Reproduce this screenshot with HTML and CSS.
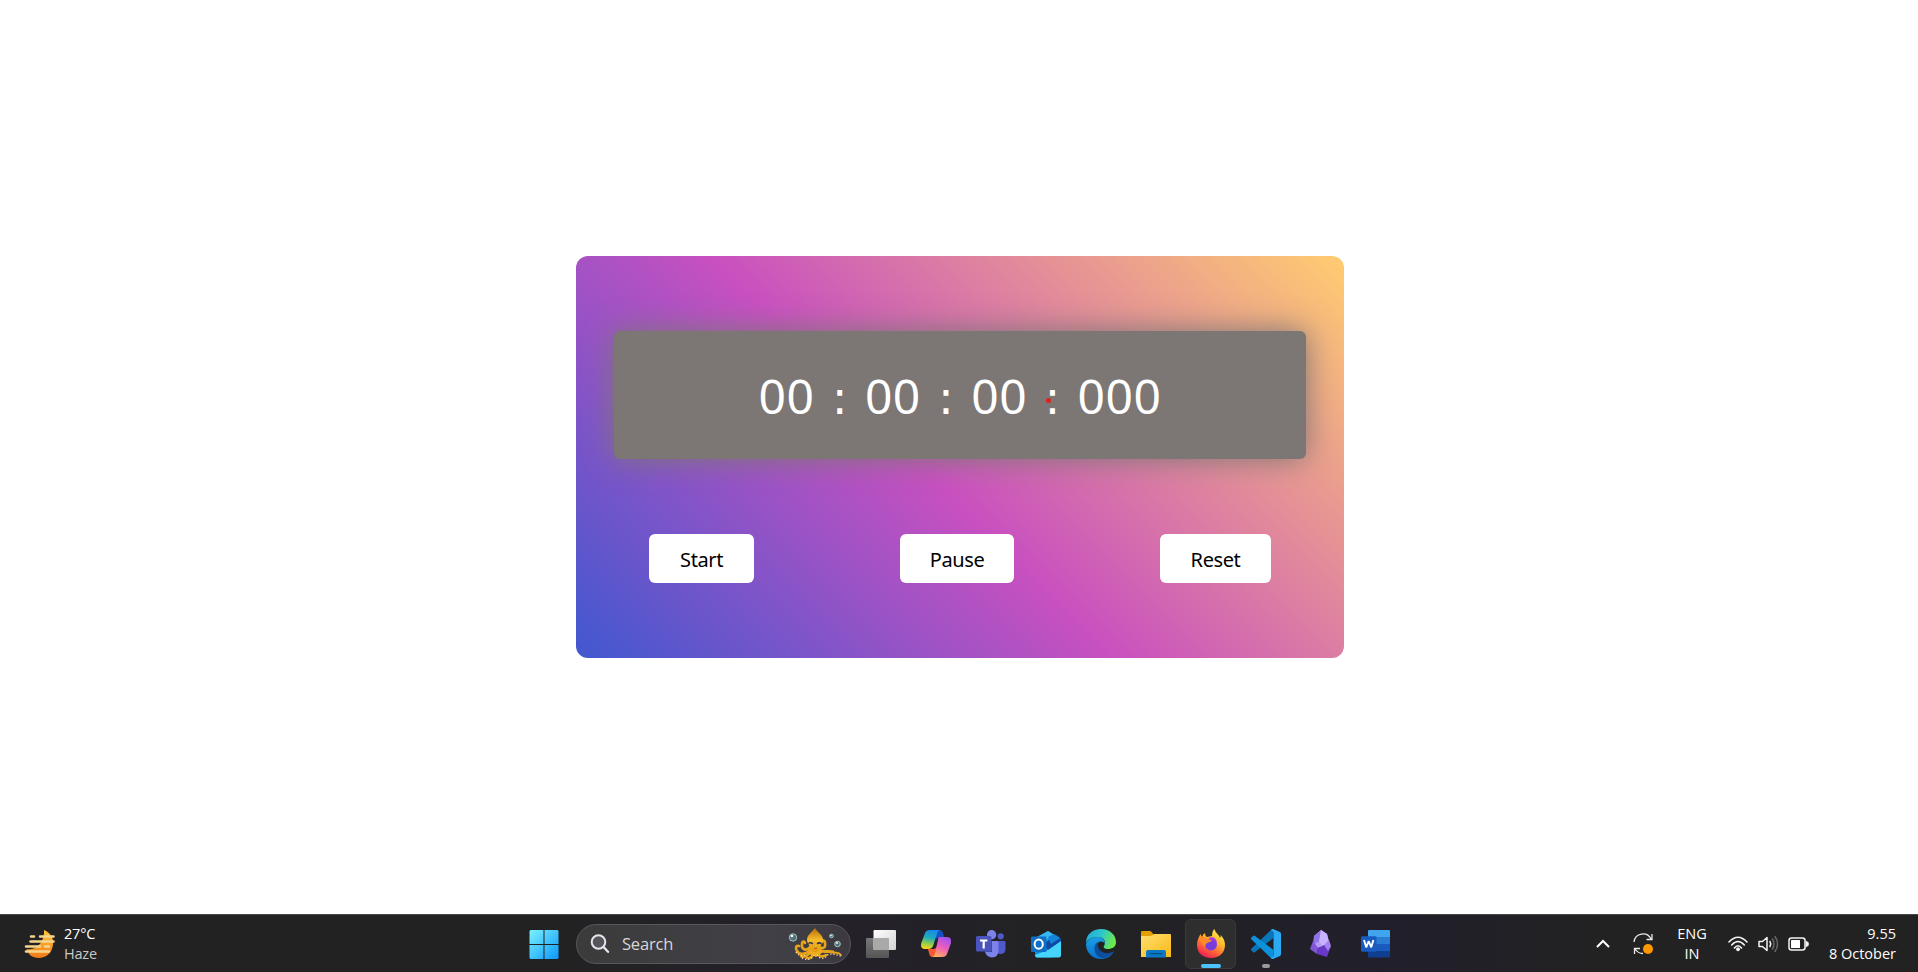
FILE: index.html
```
<!DOCTYPE html>
<html lang="en">
<head>
<meta charset="utf-8">
<title>Stopwatch</title>
<link rel="stylesheet" href="styles.css">
</head>
<body>
<main class="stage">
  <section class="card">
    <div class="display">00<span class="sep"> : </span>00<span class="sep"> : </span>00<span class="sep"> : </span>000<span class="dot"></span></div>
    <div class="controls">
      <button class="btn start">Start</button>
      <button class="btn pause">Pause</button>
      <button class="btn reset">Reset</button>
    </div>
  </section>
</main>
<footer class="taskbar">
  <div class="weather">
    <svg width="32" height="30" viewBox="0 0 32 30">
      <defs><linearGradient id="moon" x1="0" y1="0" x2="0" y2="1"><stop stop-color="#ffc83d"/><stop offset="1" stop-color="#f07a16"/></linearGradient></defs>
      <path d="M20 1C27 4 30 10 29 16C28 24 22 29 15 29C8 29 4 25 2.500 20C13 22 21 12 20 1Z" fill="url(#moon)"/>
      <g stroke="#f6d58d" stroke-width="2.500" stroke-linecap="round"><path d="M7 7.500H10M16 7.500H29.500"/><path d="M6.500 12.500H29.500"/><path d="M2 17.500H16M21 17.500H25"/><path d="M2 22.500H25"/></g>
    </svg>
    <div class="weather-text"><span>27°C</span><span class="muted">Haze</span></div>
  </div>
  <nav class="apps">
    <div class="slot">
      <svg class="windows" width="30" height="30" viewBox="0 0 30 30"><defs><linearGradient id="win" gradientUnits="userSpaceOnUse" x1="0" y1="0" x2="30" y2="30"><stop stop-color="#7df3ff"/><stop offset="1" stop-color="#0a97fa"/></linearGradient></defs><path fill="url(#win)" d="M1.500 1H14.500V15H.5V2ZM15.500 1H28.500L29.500 2V15H15.500ZM.5 16H14.500V30H1.500L.5 29ZM15.500 16H29.500V29L28.500 30H15.500Z"/></svg>
    </div>
    <div class="search">
      <svg class="lens" width="20" height="20" viewBox="0 0 20 20" fill="#55555b" stroke="#e4e6ec" stroke-width="2"><circle cx="8.500" cy="8" r="6.800"/><path d="M13.500 13L18 17.800" stroke-width="2.400" stroke-linecap="round"/></svg>
      <span>Search</span>
      <svg class="octopus" width="54" height="34" viewBox="0 0 54 34" fill="none">
        <defs><linearGradient id="oct" x1="0" y1="0" x2="0" y2="1"><stop stop-color="#b76b0c"/><stop offset=".5" stop-color="#f4bd28"/><stop offset="1" stop-color="#e2990f"/></linearGradient></defs>
        <g stroke="#e7a41a" stroke-width="2.600" stroke-linecap="round">
          <path d="M22 20C18 25 13 22 14 17C14 14 17 14 17 16"/><path d="M23 21C20 27 12 29 9 24C7 21 8 18 11 19"/><path d="M24 22C21 28 17 31 13 29"/><path d="M26 23C25 29 23 32 19 31"/><path d="M31 19C34 23 38 21 37 16C37 13 34 13 34 15"/><path d="M31 22C34 27 39 23 45 25" stroke-width="3"/><path d="M44 25C48 27 50 24 53 28" stroke-width="1.800"/><path d="M28 23C29 29 34 31 38 28"/>
        </g>
        <path d="M22 20H32L34 26L28 30L21 27Z" fill="#efae20"/>
        <g stroke="#ffe5b0" stroke-width="1.300" stroke-dasharray="1.200 2"><path d="M8 25C10 29 15 30 19 27M14 31C19 34 24 32 26 28M29 28C33 34 38 31 39 28C44 26 48 28 53 29"/></g>
        <path d="M27 1C24 5 19 8 19 13C19 17 23 18 22 23C25 26 30 26 32 22C31 18 36 16 35 12C34 7 29 5 27 1Z" fill="url(#oct)"/>
        <path d="M20.500 16.500Q22.500 15 25 17M29 17Q31 15 33.500 16.500" stroke="#36315b" stroke-width="1.500"/><path d="M26 21Q27.500 22 29 21" stroke="#9c520c"/>
        <g fill="#596d76" stroke="#9ec8c4"><circle cx="5" cy="10.500" r="3.700"/><circle cx="43.500" cy="9" r="1.800"/><circle cx="49.500" cy="17" r="2.800"/></g>
        <g fill="#effbff"><circle cx="4" cy="9" r="1.300"/><circle cx="43" cy="8.500" r=".8"/><circle cx="49" cy="16" r="1"/></g>
      </svg>
    </div>
    <div class="slot">
      <svg width="30" height="30" viewBox="0 0 30 30"><defs><linearGradient id="tv" x1="0" y1="0" x2="1" y2="1"><stop stop-color="#fff"/><stop offset="1" stop-color="#d2d2d2"/></linearGradient><linearGradient id="tg" x1="0" y1="0" x2="0" y2="1"><stop stop-color="#777"/><stop offset="1" stop-color="#555"/></linearGradient></defs><rect y="9" width="23" height="20" rx="1" fill="url(#tg)"/><rect x="7.500" y="1" width="22.500" height="20" rx="1" fill="url(#tv)"/><path d="M7.500 9H22Q23 9 23 10V21H8.500Q7.500 21 7.500 20Z" fill="#a9a9a9"/></svg>
    </div>
    <div class="slot">
      <svg width="30" height="30" viewBox="0 0 30 30"><defs><linearGradient id="cl" x1=".5" y1="0" x2=".3" y2="1"><stop stop-color="#168be9"/><stop offset=".4" stop-color="#20aaba"/><stop offset=".72" stop-color="#91cd50"/><stop offset="1" stop-color="#ffd31a"/></linearGradient><linearGradient id="cr" x1=".7" y1="0" x2=".3" y2="1"><stop stop-color="#a052ee"/><stop offset=".5" stop-color="#ed5dbd"/><stop offset="1" stop-color="#ffad58"/></linearGradient></defs>
      <path d="M15 1H19Q21 1 22 4L23 8H18Q16 8 15 11Z" fill="#1550c7"/><path d="M7 20H13Q15 20 16 17L14 25Q13 28 11 28Q9 28 8 24Z" fill="#f45932"/>
      <path d="M9 1H19Q17 1 16 5L12 17Q11 20 7 20H4Q-1 20 .3 14L4 4Q5 1 9 1Z" fill="url(#cl)"/><path d="M18 8H26Q31 8 30 14L26 25Q25 28 21 28H10Q13 28 14 24L17 11Q17 8 18 8Z" fill="url(#cr)"/></svg>
    </div>
    <div class="slot">
      <svg width="30" height="30" viewBox="0 0 30 30"><circle cx="24.700" cy="7.300" r="3.100" fill="#5059c9"/><path d="M20 12H28.500Q29.500 12 29.500 13V20Q29.500 25 24.500 25Q20 25 20 20Z" fill="#5059c9"/><circle cx="15.600" cy="5.700" r="4.700" fill="#7b83eb"/><path d="M9 12H21.500Q22.500 12 22.500 13V21Q22.500 28.500 15.700 28.500Q9 28 9 21Z" fill="#7b83eb"/><path d="M9 12H16V23H9.500Z" fill="#3942a0"/><rect y="7" width="15.500" height="15.500" rx="1.500" fill="#4b53bc"/><path d="M4 10.500H11.400V12.500H8.800V19.500H6.600V12.500H4Z" fill="#fff"/></svg>
    </div>
    <div class="slot">
      <svg width="30" height="30" viewBox="0 0 30 30"><path d="M4 10L17 2L30 10V16L17 24L4 16Z" fill="#1490df"/><path d="M4 9L17 2L23 6L9 15Z" fill="#35b8f1"/><path d="M12 15L26 6L30 10V14L18 22Z" fill="#0c4aa6"/><path d="M17 8L23 5L29 9L20 15Z" fill="#1684d8"/><path d="M4 16L22 28.500H6Q4 28.500 4 26Z" fill="#148ee0"/><path d="M30 12V26Q30 28.500 27.500 28.500H6Q4 28 4 26L17 21Z" fill="#45d5fb"/><rect y="7.500" width="15.500" height="15.500" rx="1.300" fill="#0f6fc6"/><ellipse cx="7.700" cy="15.200" rx="4.100" ry="4.600" fill="none" stroke="#fff" stroke-width="2"/></svg>
    </div>
    <div class="slot">
      <svg width="30" height="30" viewBox="0 0 30 30"><defs><linearGradient id="e1" x1="0" y1=".2" x2="1" y2=".5"><stop stop-color="#23a8dc"/><stop offset=".5" stop-color="#2ec8c9"/><stop offset="1" stop-color="#6fea45"/></linearGradient><linearGradient id="e2" x1="0" y1="0" x2="0" y2="1"><stop stop-color="#1ba0e5"/><stop offset="1" stop-color="#0870c9"/></linearGradient></defs><path d="M0 14C0 5 7 0 15 0C24 0 30 6 30 13C30 18 26 20 22 20C18 20 17 18 18 17C21 12 17 8 12 8C6 8 1 11 0 14Z" fill="url(#e1)"/><path d="M0 15C1 11 6 8 12 8C16 8 19 11 19 15C17 12 14 12 12 14C9 17 11 24 18 25C22 26 26 24 28 22C25 28 20 30 15 30C7 30 0 24 0 15Z" fill="url(#e2)"/><path d="M12 13C7 15 7 24 13 28C16 30 24 29 28 22C22 26 13 24 12 17Q11 15 12 13Z" fill="#0c4e9c"/></svg>
    </div>
    <div class="slot">
      <svg width="30" height="30" viewBox="0 0 30 30"><defs><linearGradient id="fo" x1="0" y1="0" x2="1" y2="1"><stop stop-color="#ffdf70"/><stop offset="1" stop-color="#f9b916"/></linearGradient></defs><path d="M0 3Q0 2 1 2H9Q10 2 13 6H20V10H0Z" fill="#e4a000"/><path d="M0 7H9Q11 7 13 5H29Q30 5 30 6V28H0Z" fill="url(#fo)"/><path d="M5 28.500V23Q5 21 7 21H23Q25 21 25 23V28.500Z" fill="#087ac5"/><path d="M9 24.700H21" stroke="#084b80" stroke-width="1.200" stroke-linecap="round"/></svg>
    </div>
    <div class="slot active">
      <svg width="30" height="30" viewBox="0 0 30 30"><defs><linearGradient id="ff" x1=".8" y1="0" x2=".25" y2="1"><stop stop-color="#fff04b"/><stop offset=".4" stop-color="#ffb42b"/><stop offset=".72" stop-color="#ff5b3b"/><stop offset="1" stop-color="#ed155a"/></linearGradient></defs><path d="M18.500 0C19 4 23 5 24 9Q25 8 24.500 6C28 9 29 13 29 16C29 24 23 29 15 29C7 29 1 24 1 16C1 11 3 8 4.500 5Q5 7 6 8Q7 5 9 4Q9 7 11 8L16 7C16 4 17 1 18.500 0Z" fill="url(#ff)"/><circle cx="15" cy="15.500" r="6" fill="#793ddd"/><path d="M3 8Q9 7 12 10L16 11Q15 13 12 13.500Q10 14 9.500 16L8 18Q4 12 3 8Z" fill="#ff8a2a"/><path d="M12 9Q20 6 21 14Q19 11 16 11Z" fill="#a53ce8"/></svg>
    </div>
    <div class="slot running">
      <svg width="30" height="30" viewBox="0 0 30 30"><path d="M22 0L22.500 9L4 23Q3 24 2 23L.5 21.500Q-.5 20.500 .5 19.500L20 1Q21 0 22 0Z" fill="#0876b9"/><path d="M22.500 21L4 7Q3 6 2 7L.5 8.500Q-.5 9.500 .5 10.500L20 29Q21 30 22 30Z" fill="#0c92db"/><path d="M22 0L29 3Q30 3.500 30 5V25Q30 26.500 29 27L22 30Q20.500 30 19.500 28.500Q22.500 29 22.500 26V4Q22.500 1 19.500 1.500Q20.500 0 22 0Z" fill="#2baaf4"/></svg>
    </div>
    <div class="slot">
      <svg width="30" height="30" viewBox="0 0 30 30"><path d="M15 1L8 7L7 16L12 19L19 17L23 12L21 5Z" fill="#b69bf5"/><path d="M15 1L14 12L8 15L8 7Z" fill="#8f72e5"/><path d="M15 1L21 5L23 15L17 18L13 12Z" fill="#c9b2ff"/><path d="M7 12L12 19L11 25L4 20Z" fill="#8157d7"/><path d="M12 19L18 16L25 17L21 28L11 25Z" fill="#6938c7"/><path d="M18 16L23 11L25 17L22 22Z" fill="#a582ee"/></svg>
    </div>
    <div class="slot">
      <svg width="30" height="30" viewBox="0 0 30 30"><path d="M7 2Q7 1 8 1H28Q29 1 29 2V8H7Z" fill="#41a5ee"/><path d="M7 8H29V15H7Z" fill="#2b7cd3"/><path d="M7 15H29V22H7Z" fill="#185abd"/><path d="M7 22H29V27Q29 28.500 28 28.500H8Q7 28.500 7 27Z" fill="#103f91"/><rect y="7.300" width="15.500" height="15.500" rx="1.300" fill="#185abd"/><path d="M3 11L5.200 18.300L7.700 12L10.200 18.300L12.400 11" fill="none" stroke="#fff" stroke-width="1.900" stroke-linejoin="bevel"/></svg>
    </div>
  </nav>
  <div class="tray">
    <svg class="chevron" width="14" height="10" viewBox="0 0 14 10" fill="none" stroke="#fff" stroke-width="2"><path d="M1 8L7 2L13 8"/></svg>
    <svg class="sync" width="21" height="22" viewBox="0 0 21 22" fill="none" stroke="#e9e9e9" stroke-width="1.300"><path d="M1 9A9 9 0 0 1 18 6M19 1V6.500H13.500M1.500 21V15.500H7M2 16Q5 20.500 10 20.500"/><circle cx="15" cy="16" r="5" fill="#ff9800" stroke="none"/></svg>
    <div class="lang"><span>ENG</span><span>IN</span></div>
    <svg class="wifi" width="20" height="16" viewBox="0 0 20 16" fill="none" stroke="#f4f4f4" stroke-width="1.600" stroke-linecap="round"><path d="M1 6Q10-3.500 19 6M3.700 9Q10 2 16.300 9M6.500 12Q10 7.500 13.500 12"/><circle cx="10" cy="13.300" r="1.500" fill="#fff" stroke-width="1"/></svg>
    <svg class="volume" width="21" height="18" viewBox="0 0 21 18" fill="none" stroke="#f4f4f4" stroke-width="1.500" stroke-linecap="round" stroke-linejoin="round"><path d="M1 6.500V11.500H4.500L9 15.500V2.500L4.500 6.500ZM12 6.500Q13.500 9 12 11.500"/><path d="M14.500 4Q17.500 9 14.500 14M17 1.500Q22 9 17 16.500" stroke="#666"/></svg>
    <svg class="battery" width="21" height="14" viewBox="0 0 21 14" fill="none" stroke="#f4f4f4" stroke-width="1.500"><rect x="1" y="1" width="16" height="12" rx="2.500"/><rect x="3" y="3" width="9" height="8" rx=".5" fill="#fff" stroke="none"/><path d="M18.500 5V9L20 8V6Z" fill="#fff"/></svg>
    <div class="clock"><span>9.55</span><span>8 October</span></div>
  </div>
</footer>
</body>
</html>
```
FILE: styles.css
```
* { box-sizing: border-box; }
body {
  margin: 0;
  height: 972px;
  display: flex;
  flex-direction: column;
  background: #fff;
  overflow: hidden;
  font-family: "Open Sans", "Noto Sans", sans-serif;
}
svg { display: block; flex: none; }
.stage { flex: 1; display: flex; justify-content: center; align-items: center; padding-left: 2px; }
.card {
  width: 768px;
  height: 402px;
  padding: 75px 38px;
  border-radius: 12px;
  background: linear-gradient(45deg, #4158d0 0%, #c850c0 46%, #ffcc70 100%);
  font-family: "Noto Sans", sans-serif;
}
.display {
  position: relative;
  height: 128px;
  border-radius: 6px;
  background: #7c7675;
  box-shadow: 0 0 30px #7c7675;
  color: #fff;
  display: flex;
  justify-content: center;
  align-items: baseline;
  font-size: 48px;
  line-height: 129px;
  letter-spacing: 0.5px;
  white-space: nowrap;
}
.sep {
  width: 50.4px;
  text-align: center;
  font-family: "DejaVu Sans", sans-serif;
  font-size: 47px;
  letter-spacing: 0;
}
.dot { position: absolute; left: 432px; top: 67px; width: 5px; height: 5px; border-radius: 50%; background: #e32020; }
.controls { display: flex; justify-content: space-between; margin: 75px 35px 0; }
.btn {
  height: 49px;
  padding: 1px 0 0;
  border: 0;
  border-radius: 6px;
  background: #fff;
  color: #000;
  font-family: inherit;
  font-size: 20px;
  letter-spacing: -0.4px;
}
.start { width: 105px; }
.pause { width: 114px; }
.reset { width: 111px; }

.taskbar {
  height: 58px;
  display: flex;
  align-items: center;
  border-top: 1px solid #484848;
  background: linear-gradient(90deg, #222 0 27%, #24212a 45%, #222 56%, #211f2b 72%, #222 84%);
  color: #fff;
  font-size: 14.5px;
  line-height: 20px;
}
.weather { width: 517px; padding-left: 24px; display: flex; gap: 8px; align-items: center; letter-spacing: -0.2px; }
.weather-text, .lang, .clock { display: flex; flex-direction: column; }
.muted { color: #c8c8c8; }
.apps { display: flex; align-items: center; height: 57px; }
.slot { position: relative; width: 55px; height: 50px; display: grid; place-items: center; }
.windows { margin-right: 2px; }
.search {
  display: flex;
  align-items: center;
  width: 275px;
  height: 40px;
  margin: 0 2px 0 4px;
  padding: 0 8px 0 13px;
  border: 1px solid #58575b;
  border-radius: 20px;
  background: linear-gradient(90deg, #3b3b3b, #424047 70%, #3c3941);
  color: #d7d7d7;
  font-size: 16.5px;
  letter-spacing: -0.2px;
}
.search span { padding-top: 1px; }
.lens { margin-right: 12px; }
.octopus { margin-left: auto; }
.active::before { content: ""; position: absolute; inset: 0 2px; border: 1px solid #3b3b3b; border-radius: 6px; background: #2e2e2e; }
.active svg { position: relative; }
.active::after { content: ""; position: absolute; left: 18px; bottom: 1px; width: 20px; height: 4px; border-radius: 2px; background: #4cc2ff; }
.running::after { content: ""; position: absolute; left: 24px; bottom: 1px; width: 8px; height: 4px; border-radius: 2px; background: #9a9a9a; }
.tray { margin-left: auto; display: flex; align-items: center; padding-right: 22px; letter-spacing: 0; }
.sync { margin-left: 23px; }
.lang { margin-left: 20px; width: 36px; text-align: center; }
.wifi { margin-left: 18px; }
.volume { margin-left: 10px; }
.battery { margin-left: 9px; }
.clock { margin-left: 10px; width: 77px; text-align: right; }
```
